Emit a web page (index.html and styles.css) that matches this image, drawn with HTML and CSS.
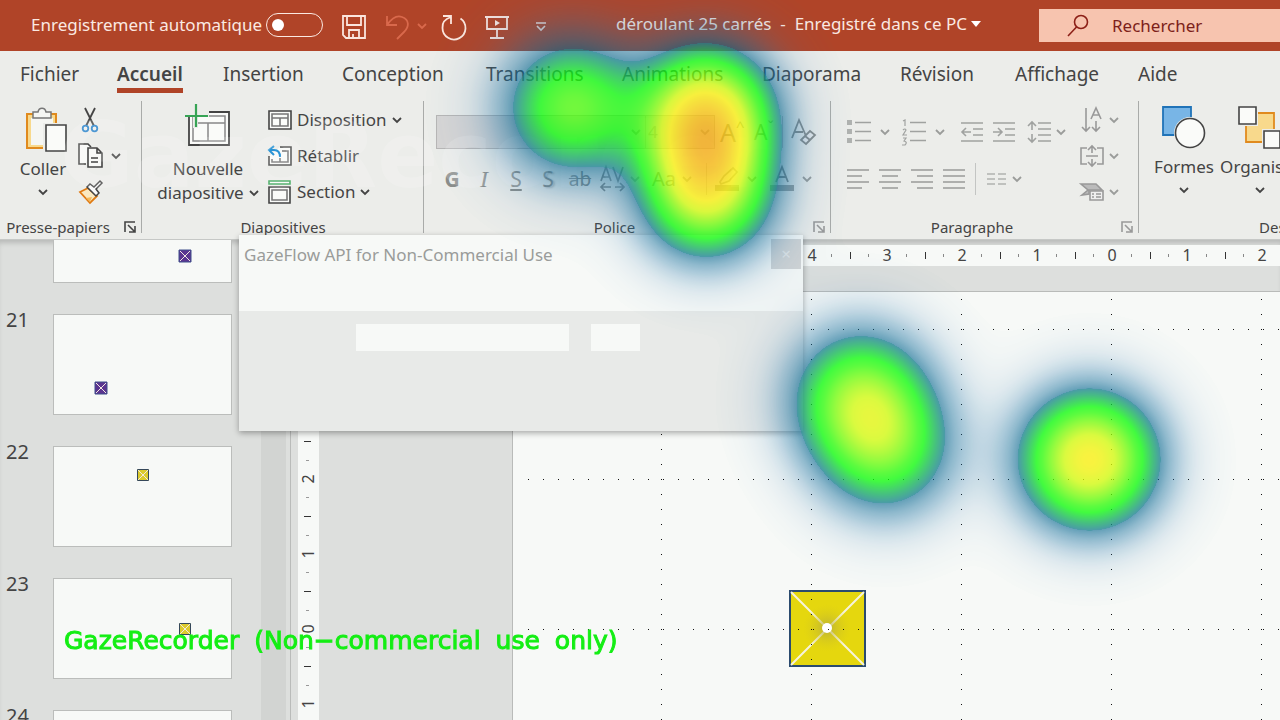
FILE: index.html
```html
<!DOCTYPE html>
<html lang="fr">
<head>
<meta charset="utf-8">
<title>déroulant 25 carrés</title>
<link rel="stylesheet" href="styles.css">
</head>
<body>
<svg class="defs" aria-hidden="true">
  <symbol id="chev" viewBox="0 0 10 8"><path d="M1 2l4 4 4-4" fill="none" stroke="currentColor" stroke-width="1.8"/></symbol>
  <symbol id="launch" viewBox="0 0 12 12"><path d="M1 11V1h10M4 4l7 7M11 5v6H5" fill="none" stroke="currentColor" stroke-width="1.6"/></symbol>
</svg>

<header class="titlebar">
  <label class="autosave"><span>Enregistrement automatique</span><input type="checkbox" class="toggle"></label>
  <div class="quick">
    <button aria-label="Enregistrer"><svg width="26" height="26" viewBox="0 0 26 26" fill="none" stroke="#fbe6de" stroke-width="1.8"><path d="M2 2h22v22H5l-3-3zM6 2v9h14V2M8 24v-8h10v8M12 20v4"/></svg></button>
    <button aria-label="Annuler"><svg width="40" height="26" viewBox="0 0 40 26" fill="none" stroke="#d9694c" stroke-width="1.8"><path d="M2 2v9h10M2 11C7 4 12 1 17 3c8 3 7 10 2 15l-7 7M33 10l4 4 4-4"/></svg></button>
    <button aria-label="Rétablir"><svg width="26" height="26" viewBox="0 0 26 26" fill="none" stroke="#fbe6de" stroke-width="1.8"><path d="M2 2h8v8M10 3C4 5 1 9 1.500 14a11.500 11.500 0 1 0 18-9.500"/></svg></button>
    <button aria-label="Diaporama"><svg width="24" height="26" viewBox="0 0 24 26" fill="none" stroke="#f6e2dc" stroke-width="1.800"><path d="M0 3h24M2 3v12h20V3M12 15v9M5 24h14"/><path d="M10 6l5 3-5 3z" fill="#f6e2dc" stroke="none"/></svg></button>
    <button aria-label="Personnaliser"><svg width="12" height="10" viewBox="0 0 12 10" fill="none" stroke="#f0d8d2" stroke-width="1.600"><path d="M1 1h10M2 4l4 4 4-4"/></svg></button>
  </div>
  <button class="doc">déroulant 25 carrés&nbsp; -&nbsp; Enregistré dans ce PC <svg width="10" height="6" viewBox="0 0 10 6"><path d="M0 0h10L5 6z" fill="#fff"/></svg></button>
  <label class="search"><svg width="22" height="24" viewBox="0 0 22 24" fill="none" stroke="#8c1f17" stroke-width="1.600"><circle cx="14" cy="8" r="6.500"/><path d="M9.500 13L1 22"/></svg><input type="text" placeholder="Rechercher" aria-label="Rechercher"></label>
</header>

<nav class="tabs">
  <a href="#">Fichier</a><a href="#" class="active">Accueil</a><a href="#">Insertion</a><a href="#">Conception</a><a href="#">Transitions</a><a href="#">Animations</a><a href="#">Diaporama</a><a href="#">Révision</a><a href="#">Affichage</a><a href="#">Aide</a>
</nav>

<section class="ribbon">
  <div class="group clipboard">
    <div class="tools">
      <button class="big"><svg width="42" height="46" viewBox="0 0 42 46"><path d="M2 7h29v34H2z" fill="#f8d98c" stroke="#e08a1e" stroke-width="2"/><path d="M6 11h22v27H6z" fill="#f5f6f3"/><path d="M8 11V5h5c1-5 7-5 8 0h5v6z" fill="#f5f6f3" stroke="#777" stroke-width="1.500"/><path d="M18 16h24v30H18z" fill="#ecedea"/><path d="M21 18h20v26H21z" fill="#fafbf9" stroke="#444" stroke-width="1.600"/></svg>
        <span>Coller</span><svg class="chev"><use href="#chev"/></svg></button>
      <div class="stack small">
        <button aria-label="Couper"><svg width="24" height="26" viewBox="0 0 24 26" fill="none" stroke-width="1.800"><path d="M7 1l9 18M17 1L8 19" stroke="#444"/><circle cx="7.500" cy="21.500" r="2.800" stroke="#2a83cb"/><circle cx="16.500" cy="21.500" r="2.800" stroke="#2a83cb"/></svg></button>
        <button aria-label="Copier"><svg width="25" height="26" viewBox="0 0 25 26" fill="#f8f9f7" stroke="#444" stroke-width="1.600"><path d="M8 21H1V1h9l3 3"/><path d="M10 5h9l5 5v14H10zM19 5v5h5M13 15h7M13 19h7"/></svg><svg class="chev"><use href="#chev"/></svg></button>
        <button aria-label="Reproduire"><svg width="25" height="24" viewBox="0 0 25 24"><path d="M2 12l8-4 9 8-7 7z" fill="#fbe9c0" stroke="#e07a12" stroke-width="1.800"/><path d="M8 18l6-1-2 5z" fill="#f3b95a"/><path d="M9 7l3-3 4 3 6-6 2 2-6 6 3 4-3 3z" fill="#fafafa" stroke="#444" stroke-width="1.500"/></svg></button>
      </div>
    </div>
    <div class="caption"><span>Presse-papiers</span><button class="launcher" aria-label="Options du presse-papiers"><svg width="12" height="12"><use href="#launch"/></svg></button></div>
  </div>

  <div class="group slides">
    <div class="tools">
      <button class="big"><svg width="46" height="46" viewBox="0 0 46 46" fill="none"><path d="M4 8h40v33H4z" fill="#fafbf9" stroke="#444" stroke-width="1.800"/><path d="M8 12h32v25H8zM8 19h32M23 19v18" stroke="#888" stroke-width="1.500"/><path d="M0 6h24v7H13v11H8V13H0z" fill="#ecedea"/><path d="M0 12h23M11 0v23" stroke="#37a455" stroke-width="2.200"/></svg>
        <span>Nouvelle</span><span class="with-chev">diapositive <svg class="chev"><use href="#chev"/></svg></span></button>
      <div class="stack wide">
        <button><svg width="24" height="20" viewBox="0 0 24 20" fill="#fafbf9" stroke="#444" stroke-width="1.600"><path d="M1 1h22v18H1z"/><path d="M4 4h16v12H4zM4 8h16M12 8v8" stroke="#777"/></svg>Disposition <svg class="chev"><use href="#chev"/></svg></button>
        <button><svg width="24" height="22" viewBox="0 0 24 22" fill="none" stroke="#444" stroke-width="1.600"><path d="M12 2h11v18H1v-9" fill="#fafbf9"/><path d="M14 6h6v11H4v-3M12 13v4" stroke="#777"/><path d="M6 1L1 5l5 5M1 5h5c5 0 6 3 6 7" stroke="#2a93d5" stroke-width="2"/></svg>Rétablir</button>
        <button><svg width="24" height="24" viewBox="0 0 24 24" fill="#fafbf9" stroke="#444" stroke-width="1.600"><path d="M1 1h21v3H1z" stroke="#37a455"/><path d="M1 7h21v16H1z"/><path d="M4 10h15v10H4z" stroke="#777"/></svg>Section <svg class="chev"><use href="#chev"/></svg></button>
      </div>
    </div>
    <div class="caption"><span>Diapositives</span></div>
  </div>

  <div class="group font">
    <div class="tools rows">
      <div class="row">
        <span class="combo name"><select aria-label="Police" disabled><option></option></select><svg class="chev"><use href="#chev"/></svg></span>
        <span class="combo size"><select aria-label="Taille" disabled><option>4</option></select><svg class="chev"><use href="#chev"/></svg></span>
        <button disabled class="grow">A<sup>^</sup></button><button disabled class="shrink">A<sup>ˇ</sup></button><i class="sep"></i>
        <button disabled class="clear" aria-label="Effacer la mise en forme"><svg width="26" height="28" viewBox="0 0 26 28" fill="none" stroke="#8b8d8b" stroke-width="1.800"><path d="M1 20L8 2l7 16M4 14h8"/><path d="M10 22l9-9 5 4-9 9z" fill="#eee"/><path d="M14 18l5 4"/></svg></button>
      </div>
      <div class="row">
        <button disabled class="f"><b>G</b></button><button disabled class="f it">I</button><button disabled class="f"><u>S</u></button><button disabled class="f sh">S</button><button disabled class="f ab"><s>ab</s></button>
        <button disabled class="av" aria-label="Espacement"><svg width="26" height="26" viewBox="0 0 26 26" fill="none" stroke="#8b8d8b" stroke-width="1.700"><path d="M1 15L6 1l5 14M3 11h6M13 1l5 14 5-14M1 21h10M15 21h9M5 17l-4 4 4 4M20 17l4 4-4 4"/></svg><svg class="chev"><use href="#chev"/></svg></button>
        <button disabled class="aa">Aa<svg class="chev"><use href="#chev"/></svg></button><i class="sep"></i>
        <button disabled class="pen" aria-label="Surlignage"><svg width="24" height="26" viewBox="0 0 24 26"><path d="M5 16l4-6 9-8 4 4-8 9-8 3z" fill="none" stroke="#a0a2a0" stroke-width="1.700"/><path d="M0 19h24v6H0z" fill="#a0a2a0"/></svg><svg class="chev"><use href="#chev"/></svg></button>
        <button disabled class="pen" aria-label="Couleur de police"><svg width="24" height="26" viewBox="0 0 24 26"><path d="M6 16l6-15 6 15M8 11h8" fill="none" stroke="#8b8d8b" stroke-width="1.800"/><path d="M0 19h24v6H0z" fill="#a0a2a0"/></svg><svg class="chev"><use href="#chev"/></svg></button>
      </div>
    </div>
    <div class="caption"><span>Police</span><button class="launcher off" aria-label="Options de police"><svg width="12" height="12"><use href="#launch"/></svg></button></div>
  </div>

  <div class="group para">
    <div class="tools">
      <div class="rows">
        <div class="row">
          <button disabled class="p55" aria-label="Puces"><svg width="24" height="24" viewBox="0 0 24 24"><path d="M0 0h5v5H0zM0 9h5v5H0zM0 18h5v5H0z" fill="#b0b2b0"/><path d="M8 2.500h16M8 11.500h16M8 20.500h16" stroke="#a0a2a0" stroke-width="1.600"/></svg><svg class="chev"><use href="#chev"/></svg></button>
          <button disabled class="p59" aria-label="Numérotation"><svg width="24" height="26" viewBox="0 0 24 26"><path d="M1 2l2-1v6M1 11q2-2 3 0l-3 5h4M1 19h3l-2 3q4 1 1 4H0" fill="none" stroke="#a0a2a0" stroke-width="1.200"/><path d="M8 3.500h16M8 12.500h16M8 21.500h16" stroke="#a0a2a0" stroke-width="1.600"/></svg><svg class="chev"><use href="#chev"/></svg></button>
          <button disabled class="p32" aria-label="Réduire le retrait"><svg width="22" height="22" viewBox="0 0 22 22" fill="none" stroke="#a0a2a0" stroke-width="1.600"><path d="M0 2h22M12 8h10M12 14h10M0 20h22M10 11H1M5 7l-4 4 4 4"/></svg></button>
          <button disabled class="p32" aria-label="Augmenter le retrait"><svg width="22" height="22" viewBox="0 0 22 22" fill="none" stroke="#a0a2a0" stroke-width="1.600"><path d="M0 2h22M12 8h10M12 14h10M0 20h22M0 11h9M5 7l4 4-4 4"/></svg></button>
          <button disabled class="p40" aria-label="Interligne"><svg width="24" height="24" viewBox="0 0 24 24" fill="none" stroke="#a0a2a0" stroke-width="1.600"><path d="M11 3h13M11 9h13M11 15h13M11 21h13M5 2v8M5 14v8M1 6l4-4 4 4M1 18l4 4 4-4"/></svg><svg class="chev"><use href="#chev"/></svg></button>
        </div>
        <div class="row">
          <button disabled class="p32" aria-label="Aligner à gauche"><svg width="22" height="22" viewBox="0 0 22 22" stroke="#999b99" stroke-width="1.600"><path d="M0 2h22M0 8h15M0 14h22M0 20h15"/></svg></button>
          <button disabled class="p32" aria-label="Centrer"><svg width="22" height="22" viewBox="0 0 22 22" stroke="#999b99" stroke-width="1.600"><path d="M0 2h22M3 8h16M0 14h22M3 20h16"/></svg></button>
          <button disabled class="p32" aria-label="Aligner à droite"><svg width="22" height="22" viewBox="0 0 22 22" stroke="#999b99" stroke-width="1.600"><path d="M0 2h22M6 8h16M0 14h22M6 20h16"/></svg></button>
          <button disabled class="p32" aria-label="Justifier"><svg width="22" height="22" viewBox="0 0 22 22" stroke="#999b99" stroke-width="1.600"><path d="M0 2h22M0 8h22M0 14h22M0 20h22"/></svg></button><i class="sep"></i>
          <button disabled class="p40" aria-label="Colonnes"><svg width="20" height="14" viewBox="0 0 20 14" stroke="#b0b2b0" stroke-width="1.600"><path d="M0 2h8M11 2h8M0 7h8M11 7h8M0 12h8M11 12h8"/></svg><svg class="chev"><use href="#chev"/></svg></button>
        </div>
      </div>
      <div class="stack dim">
        <button disabled aria-label="Orientation"><svg width="24" height="26" viewBox="0 0 24 26" fill="none" stroke="#999" stroke-width="1.600"><path d="M6 1v22M2 20l4 4 4-4M16 14v9M12 20l4 4 4-4M11 12l5-11 5 11M13 8h6"/></svg><svg class="chev"><use href="#chev"/></svg></button>
        <button disabled aria-label="Aligner le texte"><svg width="24" height="24" viewBox="0 0 24 24" fill="none" stroke="#999" stroke-width="1.600"><path d="M7 4H1v16h6M17 4h6v16h-6M6 12h12M12 2v7M12 15v7M8 6l4-4 4 4M8 18l4 4 4-4"/></svg><svg class="chev"><use href="#chev"/></svg></button>
        <button disabled aria-label="SmartArt"><svg width="24" height="20" viewBox="0 0 24 20" fill="none" stroke="#999" stroke-width="1.600"><path d="M1 2h15l6 6H9v4l-7 1 6-5z" fill="#bbb"/><path d="M10 9h13v9H10z" fill="#eee"/><path d="M12 12h2M16 12h5M12 15h2M16 15h5"/></svg><svg class="chev"><use href="#chev"/></svg></button>
      </div>
    </div>
    <div class="caption"><span>Paragraphe</span><button class="launcher off" aria-label="Options de paragraphe"><svg width="12" height="12"><use href="#launch"/></svg></button></div>
  </div>

  <div class="group draw">
    <div class="tools">
      <button class="big"><svg width="44" height="44" viewBox="0 0 44 44"><path d="M1 1h28v28H1z" fill="#78b5e6" stroke="#2073b8" stroke-width="1.800"/><circle cx="28" cy="27" r="16" fill="#ecedea"/><circle cx="28" cy="27" r="14.500" fill="#fafbf9" stroke="#444" stroke-width="1.600"/></svg>
        <span>Formes</span><svg class="chev"><use href="#chev"/></svg></button>
      <button class="big"><svg width="44" height="44" viewBox="0 0 44 44"><path d="M8 7h28v29H8z" fill="#f8d98c" stroke="#e08a1e" stroke-width="1.800"/><path d="M0 0h20v20H0zM24 23h20v20H24z" fill="#ecedea"/><path d="M1 1h17v17H1zM26 25h16v17H26z" fill="#fafbf9" stroke="#444" stroke-width="1.600"/></svg>
        <span>Organiser</span><svg class="chev"><use href="#chev"/></svg></button>
    </div>
    <div class="caption"><span>Dessin</span></div>
  </div>
  <div class="watermark">GazeRecorder</div>
</section>

<main class="workspace">
  <aside class="pane">
    <ol class="thumbs">
      <li><span></span><svg viewBox="0 0 177 99"><g transform="translate(131 73)"><path class="violet" d="M-6-6H6V6H-6z"/><path class="cross" d="M-5-5L5 5M5-5L-5 5"/></g></svg></li>
      <li><span>21</span><svg viewBox="0 0 177 99"><g transform="translate(47 73)"><path class="violet" d="M-6-6H6V6H-6z"/><path class="cross" d="M-5-5L5 5M5-5L-5 5"/></g></svg></li>
      <li><span>22</span><svg viewBox="0 0 177 99"><g transform="translate(89 28)"><path class="gold" d="M-5.500-5.500h11v11h-11z"/><path class="cross" d="M-5-5L5 5M5-5L-5 5"/></g></svg></li>
      <li><span>23</span><svg viewBox="0 0 177 99"><g transform="translate(131 50)"><path class="gold" d="M-5.500-5.500h11v11h-11z"/><path class="cross" d="M-5-5L5 5M5-5L-5 5"/></g></svg></li>
      <li><span>24</span><svg viewBox="0 0 177 99"></svg></li>
    </ol>
    <div class="scroll"></div>
  </aside>
  <div class="editor">
    <svg class="hruler" id="hruler"></svg>
    <div class="lower">
      <svg class="vruler" id="vruler"></svg>
      <div class="slide"><svg class="guides" id="guides">
        <defs><radialGradient id="haze"><stop offset="0" stop-color="#a8a04a"/><stop offset="1" stop-color="#d5c81e" stop-opacity="0"/></radialGradient></defs>
        <g transform="translate(276 298)"><path d="M1 1h75v75H1z" fill="#e5d70e" stroke="#2b4b6e" stroke-width="2"/><path d="M2 2l73 73M75 2L2 75" stroke="#f6f3dc" stroke-width="2"/><circle cx="38" cy="38" r="24" fill="url(#haze)" opacity=".7"/><circle cx="38" cy="38" r="5" fill="#fff"/></g>
      </svg></div>
    </div>
  </div>
</main>

<div class="dialog" role="dialog" aria-label="GazeFlow API">
  <div class="dialog-head"><span>GazeFlow API for Non-Commercial Use</span><button aria-label="Fermer">×</button></div>
  <div class="dialog-body"><input type="text" class="key" aria-label="Clé"><button class="ok" aria-label="Valider"></button></div>
</div>
<canvas class="heat" id="heat"></canvas>
<div class="credit"><span>GazeRecorder</span><span>(Non−commercial</span><span>use</span><span>only)</span></div>
<script src="app.js"></script>
</body>
</html>
```
FILE: styles.css
```css
* { box-sizing: border-box; }
body { margin: 0; height: 100vh; overflow: hidden; display: flex; flex-direction: column; position: relative; background: #dddfdd; color: #444; font-family: "Noto Sans", "Open Sans", sans-serif; font-size: 17px; line-height: 24px; }
button { font: inherit; color: inherit; background: none; border: 0; padding: 0; display: flex; align-items: center; flex: none; white-space: nowrap; }
svg { display: block; flex: none; overflow: visible; }
.defs { position: absolute; width: 0; height: 0; }
.chev { width: 10px; height: 8px; }

.titlebar { flex: none; height: 51px; background: #b04428; color: #fbe9e2; display: flex; align-items: center; overflow: hidden; }
.autosave { display: flex; align-items: center; gap: 4px; padding: 0 0 2px 31px; width: 341px; flex: none; white-space: nowrap; }
.toggle { appearance: none; margin: 0; width: 57px; height: 24px; border: 1px solid #fbe9e2; border-radius: 12px; display: flex; align-items: center; padding-left: 5px; }
.toggle::before { content: ""; width: 12px; height: 12px; border-radius: 50%; background: #fff; }
.quick { display: flex; align-items: center; gap: 18px; width: 275px; flex: none; padding-top: 2px; }
.quick button:nth-child(2) { margin-right: -2px; }
.quick button:last-child { margin-left: 8px; }
.doc { gap: 4px; width: 423px; padding-bottom: 4px; }
.search { flex: 1; min-width: 0; height: 33px; background: #f7c4af; display: flex; align-items: center; gap: 23px; padding-left: 28px; }
.search input { border: 0; background: none; padding: 0; font: inherit; width: 120px; outline: 0; }
.search input::placeholder { color: #7d1f1a; opacity: 1; }

.tabs { flex: none; height: 49px; background: #ecedea; display: grid; grid-template-columns: 97px 106px 119px 144px 136px 140px 138px 115px 123px 1fr; padding: 9px 0 0 20px; font-size: 19px; line-height: 28px; }
.tabs a { color: #444; text-decoration: none; justify-self: start; height: 33px; white-space: nowrap; }
.tabs .active { font-weight: 600; border-bottom: 5px solid #b04428; }

.ribbon { flex: none; height: 139px; background: #ecedea; display: flex; overflow: hidden; position: relative; }
.group { flex: none; display: flex; flex-direction: column; position: relative; }
.group::after { content: ""; position: absolute; right: 0; top: 1px; bottom: 6px; width: 1px; background: #a9aba9; }
.clipboard { width: 142px; }
.slides { width: 282px; }
.font { width: 407px; }
.para { width: 308px; }
.draw { flex: 1 1 141px; min-width: 0; }
.draw::after { display: none; }
.tools { height: 116px; display: flex; }
.caption { display: flex; align-items: center; height: 22px; font-size: 15px; }
.caption span { flex: 1; text-align: center; }
.clipboard .caption span, .font .caption span, .para .caption span { padding-right: 8px; }
.draw .caption span { text-align: left; padding-left: 120px; }
.launcher { width: 18px; }
.launcher.off { color: #999; }
.big { flex-direction: column; }
.big span { height: 24px; }
.big > .chev { margin-top: 7px; }
.clipboard .big { width: 86px; padding-top: 7px; }
.clipboard .big > svg:first-child { margin: 0 0 4px 6px; }
.stack { display: grid; grid-template-rows: 36px 36px 36px; align-content: start; padding-top: 2px; }
.small { margin-left: -8px; }
.small button { gap: 8px; }
.slides .big { width: 102px; margin: 4px 9px 0 15px; }
.slides .big > svg:first-child { margin-bottom: 7px; }
.with-chev { display: flex; align-items: center; gap: 5px; }
.wide button { gap: 5px; }
.rows { display: flex; flex-direction: column; gap: 13px; padding: 15px 0 0 12px; }
.row { display: flex; align-items: center; height: 34px; }
.sep { width: 1px; height: 32px; background: #c3c5c3; flex: none; }
button:disabled { color: #8b8d8b; }
button:disabled .chev { color: #9a9c9a; }
.combo { height: 34px; border: 1px solid #b8b6b5; background: #d8d6d5; display: flex; align-items: center; padding-right: 4px; color: #999; }
.combo select { appearance: none; border: 0; background: none; flex: 1; min-width: 0; font: inherit; color: #999; padding: 0 2px; opacity: 1; }
.name { width: 210px; }
.size { width: 69px; border-left: 0; }
.grow, .shrink { font-size: 25px; margin-left: 5px; width: 29px; }
.shrink { font-size: 21px; width: 28px; }
.grow sup, .shrink sup { font-size: 15px; line-height: 12px; align-self: flex-start; }
.clear { margin-left: 8px; }
.f { width: 32px; justify-content: center; font-size: 21px; }
.it { font-family: "Liberation Serif", serif; font-style: italic; font-size: 24px; }
.sh { text-shadow: 2px 1px 2px #bbb; }
.ab { font-size: 19px; }
.av { gap: 4px; margin: 0 12px 0 4px; }
.aa { gap: 6px; font-size: 20px; margin-right: 8px; width: 46px; }
.pen { gap: 8px; margin: 0 5px 0 8px; }
.para .rows { width: 249px; padding-left: 16px; }
.p55, .p59, .p40 { gap: 9px; width: 55px; }
.p59 { width: 59px; }
.p32 { width: 32px; }
.p40 { gap: 5px; padding-left: 2px; }
.para .sep { margin-right: 9px; }
.dim button { gap: 5px; }
.draw .big { width: 90px; padding-top: 6px; }
.draw .big + .big { margin-left: -14px; }
.draw .big > svg:first-child { margin-bottom: 5px; }
.watermark { position: absolute; left: 60px; top: 4px; font: bold 90px/104px "DejaVu Sans", sans-serif; color: #fff; opacity: .16; pointer-events: none; }

.workspace { flex: 1; min-height: 0; display: flex; box-shadow: inset 0 5px 5px -2px #b8bab8; background: #dddfdd; border-top: 1px solid #c6c8c6; overflow: hidden; }
.pane { width: 291px; flex: none; display: flex; border-right: 1px solid #b9bbb9; }
.thumbs { list-style: none; margin: -58px 0 0; padding: 0; width: 261px; display: flex; flex-direction: column; gap: 31px; }
.thumbs li { display: flex; height: 101px; flex: none; }
.thumbs span { width: 53px; padding-left: 6px; font-size: 20px; line-height: 12px; }
.thumbs svg { width: 179px; height: 101px; background: #f7f9f7; border: 1px solid #bbbdbb; }
.violet { fill: #5b3590; stroke: #3f4f8a; }
.gold { fill: #dccb2c; stroke: #35485a; }
.cross { stroke: #f1e8e0; fill: none; }
.scroll { width: 25px; background: #d2d4d2; }
.editor { flex: 1; min-width: 0; display: flex; flex-direction: column; padding: 5px 0 0 7px; }
.hruler { width: 100%; height: 21px; background: #f7f9f7; overflow: hidden; }
.lower { flex: 1; min-height: 0; display: flex; padding-top: 25px; }
.vruler { width: 21px; height: 100%; background: #f7f9f7; overflow: hidden; }
.hruler text, .vruler text { font-size: 16px; fill: #444; text-anchor: middle; }
.slide { flex: 1; min-width: 0; margin-left: 193px; background: #f7f9f7; border: solid #b9bbb9; border-width: 1px 0 0 1px; }
.guides { width: 100%; height: 100%; overflow: hidden; }

.dialog { position: absolute; left: 239px; top: 235px; width: 564px; height: 196px; box-shadow: 0 2px 6px #0005; background: #e8eae8; display: flex; flex-direction: column; }
.dialog-head { height: 76px; background: #f7f9f7; display: flex; justify-content: space-between; align-items: flex-start; padding: 4px 2px 0 5px; color: #9a9c9a; line-height: 32px; }
.dialog-head button { width: 30px; height: 30px; justify-content: center; background: #d3d5d5; color: #e6e8e8; }
.dialog-body { display: flex; gap: 22px; padding: 13px 0 0 117px; }
.key, .ok { height: 27px; width: 213px; border: 0; background: #f7f9f7; }
.ok { width: 49px; }
.heat { position: absolute; left: 0; top: 0; width: 100%; height: 100%; pointer-events: none; }
.credit { position: absolute; left: 64px; top: 625px; display: flex; gap: 15px; color: #14ee14; font: 25px/32px "DejaVu Sans", sans-serif; white-space: nowrap; -webkit-text-stroke: 1px #14ee14; }
```
FILE: app.js
```js
const NS = 'http://www.w3.org/2000/svg';
function add(parent, tag, attrs, text) {
  const e = document.createElementNS(NS, tag);
  for (const k in attrs) e.setAttribute(k, attrs[k]);
  if (text !== undefined) e.textContent = text;
  parent.appendChild(e);
}

// Rulers: one unit is 75px, with a long tick at the half and short ones at the quarters.
const h = document.getElementById('hruler');
for (let i = -4; i <= 2; i++) {
  const x = 814 + i * 75;
  add(h, 'text', { x, y: 16 }, Math.abs(i));
  add(h, 'path', { d: `M${x + 38.5} 7v7`, stroke: '#333' });
  add(h, 'path', { d: `M${x + 19.5} 9v3M${x + 56.5} 9v3`, stroke: '#888' });
}
const v = document.getElementById('vruler');
for (let i = -2; i <= 1; i++) {
  const y = 338 + i * 75;
  add(v, 'text', { transform: `translate(16 ${y}) rotate(-90)` }, Math.abs(i));
  add(v, 'path', { d: `M6 ${y - 37.5}h7`, stroke: '#333' });
  add(v, 'path', { d: `M8 ${y - 18.5}h3M8 ${y + 18.5}h3`, stroke: '#999' });
}
const g = document.getElementById('guides');
for (let x = 148; x < 3000; x += 150) add(g, 'path', { d: `M${x + 0.5} 7v3000`, stroke: '#111', 'stroke-dasharray': '1 14' });
for (let y = 37; y < 2000; y += 150) add(g, 'path', { d: `M15 ${y + 0.5}h3000`, stroke: '#111', 'stroke-dasharray': '1 14' });

// Gaze heat map: summed fixations [x, y, weight, radius] coloured through a ramp.
const fixations = [
  [571, 107, .62, 47], [706, 112, .96, 44], [706, 150, .25, 38], [706, 195, .77, 43],
  [859, 396, .64, 46], [886, 450, .5, 45], [1089, 459, 1, 45]
];
const ramp = [
  [0, 60, 130, 190, 0], [.05, 50, 125, 180, .1], [.15, 30, 115, 165, .34], [.287, 10, 105, 145, .62],
  [.288, 25, 128, 145, .78], [.5, 15, 251, 12, .78], [.58, 50, 251, 12, .78],
  [.86, 210, 250, 12, .78], [1, 250, 240, 12, .78], [1.45, 245, 155, 14, .78], [2, 240, 90, 10, .78]
];
function drawHeat() {
  const c = document.getElementById('heat');
  c.width = innerWidth; c.height = innerHeight;
  const ctx = c.getContext('2d');
  const img = ctx.createImageData(c.width, c.height);
  for (let y = 0, p = 0; y < c.height; y++) for (let x = 0; x < c.width; x++, p += 4) {
    let t = 0;
    for (const [fx, fy, w, r] of fixations) t += w * Math.exp(-((x - fx) ** 2 + (y - fy) ** 2) / (2 * r * r));
    if (t < .005) continue;
    let i = 1;
    while (i < ramp.length - 1 && ramp[i][0] < t) i++;
    const a = ramp[i - 1], b = ramp[i], k = Math.min(1, (t - a[0]) / (b[0] - a[0]));
    for (let n = 0; n < 3; n++) img.data[p + n] = a[n + 1] + (b[n + 1] - a[n + 1]) * k;
    img.data[p + 3] = 255 * (a[4] + (b[4] - a[4]) * k);
  }
  ctx.putImageData(img, 0, 0);
}
drawHeat();
addEventListener('resize', drawHeat);
```
